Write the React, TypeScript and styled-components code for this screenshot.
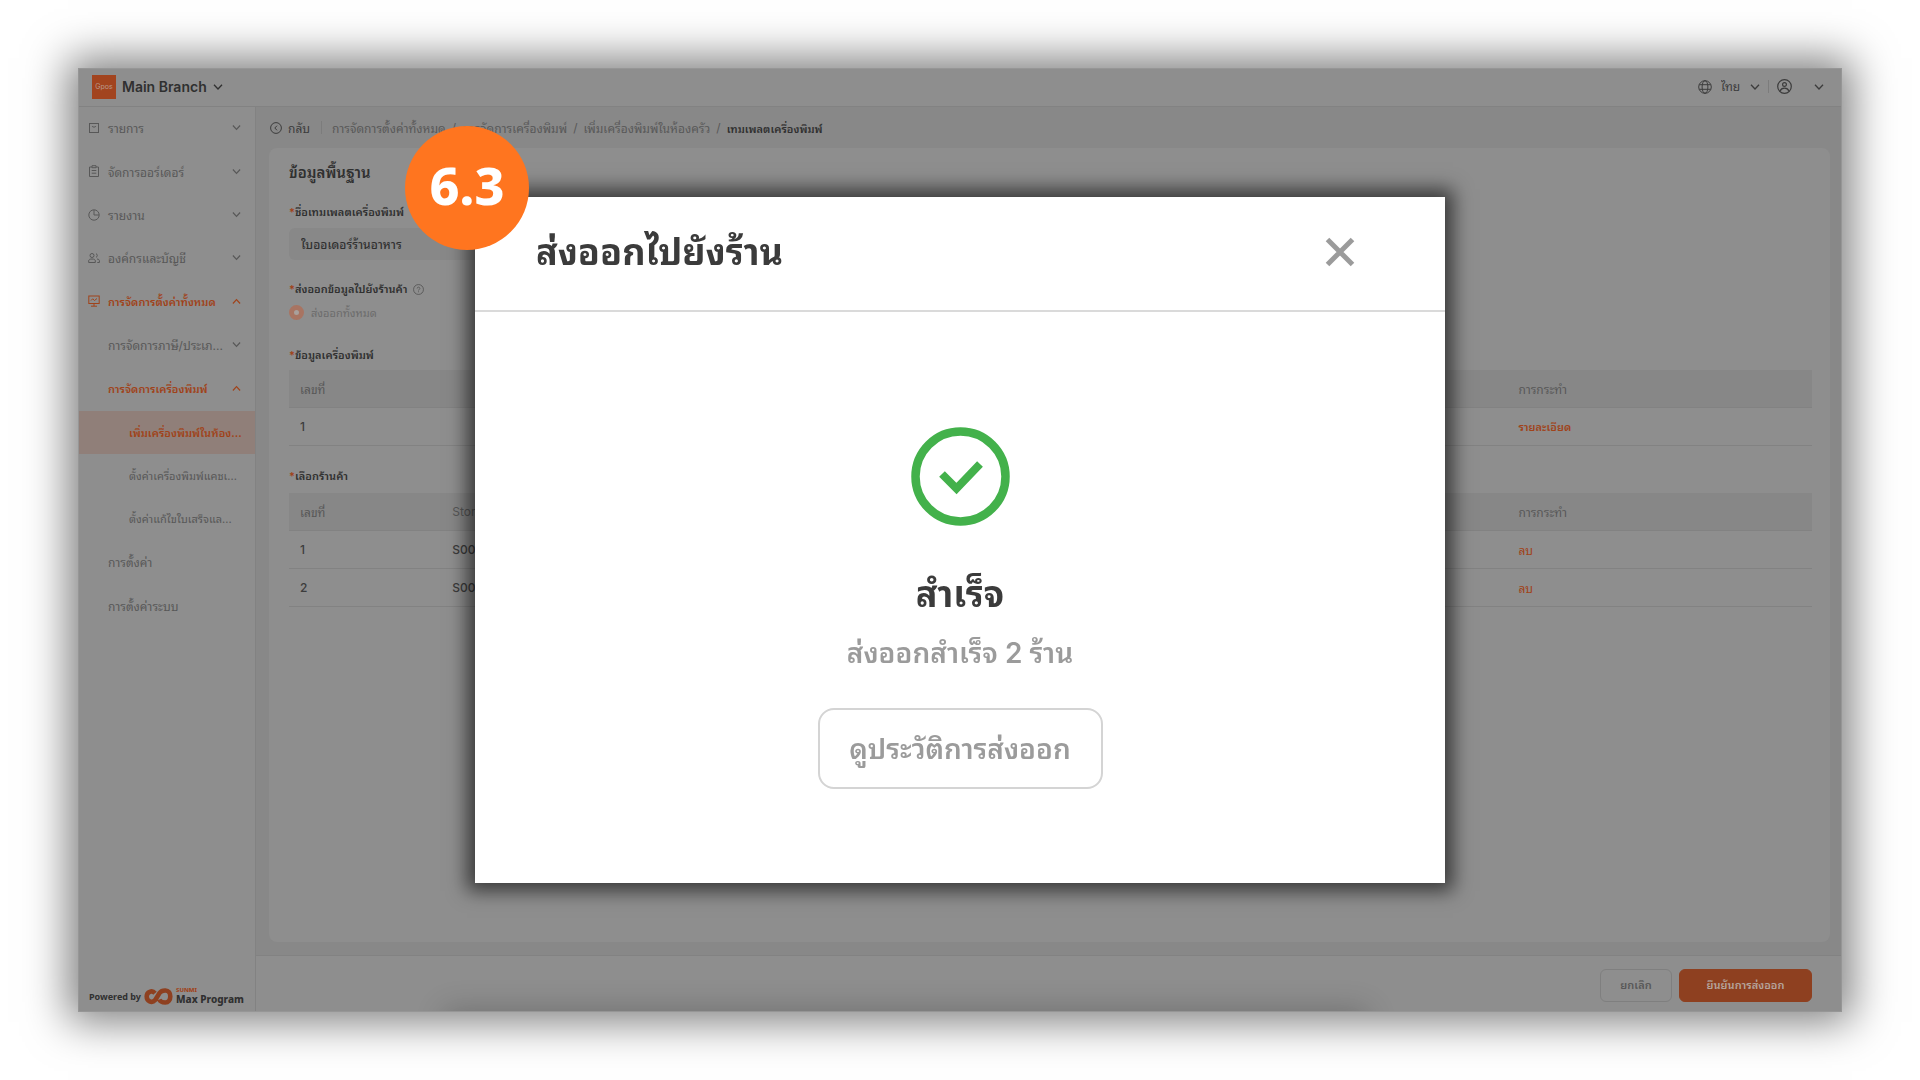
import React from "react";
import styled, { createGlobalStyle, css } from "styled-components";

const c = {
  panel: "#8e8e8e",
  canvas: "#888888",
  line: "#828282",
  ink: "#303030",
  text: "#3c3c3c",
  muted: "#585858",
  faint: "#6c6c6c",
  orange: "#a0431a",
  orangeFill: "#8e4020",
};

const Global = createGlobalStyle`
  *, *::before, *::after { box-sizing: border-box; }
  body { margin: 0; background: #fff; }
  body, button, select, input {
    font-family: Inter, "Noto Sans Thai Looped", Thonburi, Loma, Garuda, Waree, "Noto Sans Thai", "Noto Sans", sans-serif;
  }
  button, select { border: 0; background: none; padding: 0; margin: 0; color: inherit; cursor: pointer; }
  a { color: inherit; text-decoration: none; }
  svg { display: block; flex: none; }
`;

const Page = styled.div`
  min-height: 100vh;
  display: flex;
  padding: 68px 78px;
`;
const Window = styled.div`
  flex: 1;
  min-width: 0;
  display: flex;
  flex-direction: column;
  background: ${c.panel};
  border: 1px solid #969696;
  box-shadow: 0 0 40px 10px rgba(0, 0, 0, 0.5);
  font-size: 12px;
  color: ${c.text};
`;
const TopBar = styled.header`
  height: 38px;
  flex: none;
  display: flex;
  align-items: center;
  justify-content: space-between;
  padding: 0 17px 2px 13px;
  border-bottom: 1px solid ${c.line};
`;
const Cluster = styled.div<{ $gap: number }>`
  display: flex;
  align-items: center;
  gap: ${(p) => p.$gap}px;
`;
const Branch = styled.button`
  display: flex;
  align-items: center;
  gap: 6px;
  font-size: 14px;
  font-weight: 600;
  color: ${c.ink};
`;
const BrandTile = styled.span`
  width: 24px;
  height: 24px;
  display: grid;
  place-items: center;
  background: #a2441f;
  color: #b99a8e;
  font-size: 7px;
  font-weight: 400;
`;
const LangSelect = styled.select`
  appearance: none;
  font-size: 12px;
  color: ${c.text};
`;
const IconButton = styled.button`
  display: flex;
  align-items: center;
  gap: 22px;
  color: ${c.text};
`;
const VLine = styled.span`
  width: 1px;
  height: 13px;
  background: #7c7c7c;
`;
const Body = styled.div`
  flex: 1;
  min-height: 0;
  display: flex;
`;
const Sidebar = styled.aside`
  width: 177px;
  flex: none;
  display: flex;
  flex-direction: column;
  justify-content: space-between;
  border-right: 1px solid ${c.line};
`;
const Menu = styled.nav`
  height: 521px;
  display: grid;
  grid-auto-rows: 1fr;
`;
const MenuItem = styled.button<{ $level: number; $hot?: boolean; $active?: boolean }>`
  display: flex;
  align-items: center;
  min-width: 0;
  gap: 8px;
  padding: 0 14px 2px ${(p) => (p.$level === 0 ? 9 : p.$level === 1 ? 29 : 50)}px;
  font-size: ${(p) => (p.$hot || p.$level === 2 ? 11 : 12)}px;
  color: ${c.muted};
  text-align: left;
  ${(p) => p.$hot && css`color: ${c.orange}; font-weight: 600;`}
  ${(p) => p.$active && css`background: #907f79;`}
`;
const MenuText = styled.span`
  flex: 1;
  white-space: nowrap;
`;
const Powered = styled.div`
  display: flex;
  align-items: center;
  gap: 3px;
  padding: 0 10px 6px;
  font-family: "Noto Sans", sans-serif;
  font-size: 9px;
  font-weight: 700;
  color: ${c.ink};
  white-space: nowrap;
`;
const PoweredName = styled.span`
  display: flex;
  flex-direction: column;
  font-size: 10px;
  line-height: 12px;
  font-weight: 800;
`;
const PoweredBrand = styled.span`
  font-size: 6px;
  line-height: 6px;
  color: ${c.orange};
`;
const Main = styled.main`
  flex: 1;
  min-width: 0;
  display: flex;
  flex-direction: column;
  background: ${c.canvas};
`;
const Crumbs = styled.nav`
  height: 41px;
  flex: none;
  display: flex;
  align-items: center;
  gap: 6px;
  padding: 0 14px;
  color: ${c.muted};
  white-space: nowrap;
`;
const Back = styled.a`
  display: flex;
  align-items: center;
  gap: 6px;
  padding-right: 5px;
  color: ${c.text};
`;
const Current = styled.span`
  color: ${c.ink};
  font-size: 11px;
  font-weight: 600;
`;
const CrumbStart = styled.a`
  padding-left: 4px;
`;
const Card = styled.section`
  flex: 1;
  margin: 0 11px 13px 13px;
  padding: 12px 18px 20px 20px;
  border-radius: 8px;
  background: ${c.panel};
`;
const CardTitle = styled.h2`
  margin: 0 0 17px;
  font-size: 15px;
  line-height: 25px;
  font-weight: 600;
  color: ${c.ink};
`;
const labelCss = css`
  display: flex;
  align-items: center;
  margin: 0;
  font-size: 11px;
  line-height: 20px;
  font-weight: 600;
  color: ${c.ink};
  &::before { content: "*"; color: ${c.orange}; }
`;
const Label = styled.label`
  ${labelCss}
`;
const GroupLabel = styled.h3<{ $top: number; $bottom: number }>`
  ${labelCss}
  padding: ${(p) => p.$top}px 0 ${(p) => p.$bottom}px;
  svg { margin-left: 5px; color: ${c.muted}; }
`;
const TextInput = styled.input`
  display: block;
  width: 300px;
  height: 32px;
  margin-top: 6px;
  padding: 0 12px 2px;
  border: 0;
  border-radius: 6px;
  background: ${c.canvas};
  font-size: 12px;
  font-weight: 500;
  color: ${c.ink};
`;
const RadioLabel = styled.label`
  display: flex;
  align-items: center;
  gap: 7px;
  height: 18px;
  color: ${c.faint};
  font-size: 11px;
`;
const Radio = styled.input`
  appearance: none;
  width: 15px;
  height: 15px;
  margin: 0;
  border: 5px solid #a87462;
  border-radius: 50%;
  background: #a9a09c;
`;
const Table = styled.table`
  width: 100%;
  table-layout: fixed;
  border-collapse: separate;
  border-spacing: 0;
  th, td {
    height: 38px;
    padding: 0 11px 1px;
    border-bottom: 1px solid ${c.line};
    text-align: left;
    font-size: 12px;
    font-weight: 500;
  }
  th { background: #878787; color: ${c.muted}; font-weight: 400; }
  col:first-child { width: 10%; }
  col:last-child { width: 20%; }
`;
const RowLink = styled.a<{ $strong?: boolean }>`
  color: ${c.orange};
  font-size: ${(p) => (p.$strong ? 11 : 12)}px;
  font-weight: ${(p) => (p.$strong ? 600 : 400)};
`;
const Footer = styled.footer`
  position: relative;
  overflow: hidden;
  height: 56px;
  flex: none;
  display: flex;
  align-items: center;
  justify-content: flex-end;
  gap: 7px;
  padding: 3px 29px 0 0;
  border-top: 1px solid ${c.line};
  background: ${c.panel};
  &::after {
    content: "";
    position: absolute;
    left: 12%;
    right: 30%;
    top: 100%;
    height: 40px;
    box-shadow: 0 0 30px 2px rgba(0, 0, 0, 0.2);
  }
`;
const FooterButton = styled.button<{ $primary?: boolean }>`
  height: 33px;
  min-width: ${(p) => (p.$primary ? 133 : 72)}px;
  padding: 0 12px 2px;
  border: 1px solid ${(p) => (p.$primary ? c.orangeFill : "#7f7f7f")};
  border-radius: 6px;
  background: ${(p) => (p.$primary ? c.orangeFill : "transparent")};
  color: ${(p) => (p.$primary ? "#b5a49c" : c.muted)};
  font-size: 11px;
  font-weight: 600;
  white-space: nowrap;
`;

const Overlay = styled.div`
  position: fixed;
  inset: 0;
  display: grid;
  place-items: center;
`;
const Modal = styled.div`
  position: relative;
  width: 970px;
  max-width: 90vw;
  background: #fff;
  box-shadow: 0 0 18px 8px rgba(0, 0, 0, 0.6);
`;
const ModalHead = styled.div`
  height: 115px;
  display: flex;
  align-items: center;
  justify-content: space-between;
  padding: 0 90px 4px 61px;
  border-bottom: 2px solid #dadada;
`;
const ModalTitle = styled.h1`
  margin: 0;
  font-size: 36px;
  line-height: 48px;
  font-weight: 700;
  color: #3b3b3b;
`;
const CloseButton = styled.button`
  display: flex;
  color: #9b9b9b;
`;
const ModalBody = styled.div`
  display: flex;
  flex-direction: column;
  align-items: center;
  padding: 115px 40px 94px;
`;
const ResultTitle = styled.h2`
  margin: 42px 0 0;
  font-size: 36px;
  line-height: 52px;
  font-weight: 700;
  color: #3b3b3b;
`;
const ResultText = styled.p`
  margin: 12px 0 34px;
  font-size: 28px;
  line-height: 42px;
  font-weight: 600;
  color: #9b9b9b;
`;
const HistoryButton = styled.button`
  height: 81px;
  min-width: 285px;
  padding: 0 24px 4px;
  border: 2px solid #d4d4d4;
  border-radius: 16px;
  font-size: 28px;
  font-weight: 600;
  color: #9b9b9b;
`;
const StepBadge = styled.div`
  position: absolute;
  left: -70px;
  top: -71px;
  width: 124px;
  height: 124px;
  padding-bottom: 8px;
  display: grid;
  place-items: center;
  border-radius: 50%;
  background: #ff751f;
  color: #fff;
  font-family: "Noto Sans", sans-serif;
  font-size: 52px;
  font-weight: 800;
`;

const Chevron = ({ up, size = 9 }: { up?: boolean; size?: number }) => (
  <svg width={size} height={size} viewBox="0 0 10 10" fill="none" stroke="currentColor" strokeWidth="1.3">
    <path d={up ? "M1 7.2 5 3l4 4.2" : "M1 2.8 5 7l4-4.2"} />
  </svg>
);

const paths: Record<string, React.ReactNode> = {
  box: <><rect x="1.5" y="1.5" width="9" height="9" /><path d="M4 4c.5 1.500 3.500 1.500 4 0" /></>,
  clipboard: <><path d="M4 2H1.500v9.500h9V2H8" /><path d="M4 .7h4v2H4zM3.700 5.500h4.600M3.700 8.200h4.600" /></>,
  clock: <><circle cx="6" cy="6" r="5.200" /><path d="M6 1v5h5" /></>,
  people: <><circle cx="4" cy="3.500" r="2" /><path d="M.7 10.500V8.800C.7 7.600 1.700 7 4 7s3.300.6 3.300 1.800v1.700zM8 1.700a1.900 1.900 0 0 1 0 3.600M9 7c1.700.2 2.400.8 2.400 1.800v1.700H9.300" /></>,
  monitor: <><rect x=".8" y="1" width="10.400" height="7.500" /><path d="M3 5.500l1.700-1.700L6.500 5.500 9 3.500M6 8.500V11M3 11.200h6" /></>,
};
const MenuIcon = ({ name }: { name: string }) => (
  <svg width="12" height="12" viewBox="0 0 12 12" fill="none" stroke="currentColor" strokeWidth="1">
    {paths[name]}
  </svg>
);

type Item = { text: string; level: number; icon?: string; arrow?: "up" | "down"; hot?: boolean; active?: boolean };
const menu: Item[] = [
  { text: "รายการ", level: 0, icon: "box", arrow: "down" },
  { text: "จัดการออร์เดอร์", level: 0, icon: "clipboard", arrow: "down" },
  { text: "รายงาน", level: 0, icon: "clock", arrow: "down" },
  { text: "องค์กรและบัญชี", level: 0, icon: "people", arrow: "down" },
  { text: "การจัดการตั้งค่าทั้งหมด", level: 0, icon: "monitor", arrow: "up", hot: true },
  { text: "การจัดการภาษี/ประเภ...", level: 1, arrow: "down" },
  { text: "การจัดการเครื่องพิมพ์", level: 1, arrow: "up", hot: true },
  { text: "เพิ่มเครื่องพิมพ์ในห้อง...", level: 2, hot: true, active: true },
  { text: "ตั้งค่าเครื่องพิมพ์แคชเ...", level: 2 },
  { text: "ตั้งค่าแก้ไขใบเสร็จแล...", level: 2 },
  { text: "การตั้งค่า", level: 1 },
  { text: "การตั้งค่าระบบ", level: 1 },
];

const Cols = () => (
  <colgroup>
    <col />
    <col />
    <col />
  </colgroup>
);

export default function App() {
  return (
    <>
      <Global />
      <Page>
        <Window>
          <TopBar>
            <Branch>
              <BrandTile>Gpos</BrandTile>
              Main Branch
              <Chevron size={10} />
            </Branch>
            <Cluster $gap={8}>
              <Cluster $gap={9}>
                <svg width="14" height="14" viewBox="0 0 14 14" fill="none" stroke="currentColor">
                  <circle cx="7" cy="7" r="6.300" />
                  <ellipse cx="7" cy="7" rx="2.900" ry="6.300" />
                  <path d="M1.300 4.700h11.400M1.300 9.300h11.400" />
                </svg>
                <LangSelect aria-label="ภาษา" defaultValue="th">
                  <option value="th">ไทย</option>
                </LangSelect>
                <Chevron size={10} />
              </Cluster>
              <VLine />
              <IconButton aria-label="บัญชี">
                <svg width="15" height="15" viewBox="0 0 15 15" fill="none" stroke="currentColor" strokeWidth="1.200">
                  <circle cx="7.500" cy="7.500" r="6.800" />
                  <circle cx="7.500" cy="5.500" r="1.900" />
                  <path d="M3 12.200c.8-2.200 2.400-3 4.500-3s3.700.8 4.500 3" />
                </svg>
                <Chevron size={10} />
              </IconButton>
            </Cluster>
          </TopBar>
          <Body>
            <Sidebar>
              <Menu>
                {menu.map((m) => (
                  <MenuItem key={m.text} $level={m.level} $hot={m.hot} $active={m.active}>
                    {m.icon && <MenuIcon name={m.icon} />}
                    <MenuText>{m.text}</MenuText>
                    {m.arrow && <Chevron up={m.arrow === "up"} />}
                  </MenuItem>
                ))}
              </Menu>
              <Powered>
                Powered by
                <svg width="29" height="17" viewBox="0 0 29 17" fill="none" stroke={c.orangeFill} strokeWidth="4.600">
                  <path d="M11 5.200C8 1.700 2.700 4 2.700 8.500s5 7.300 8.500 3.500L15.500 5c2-2.700 4-2.500 6-2.500 3 0 4.800 2.500 4.800 6s-2 6-5 6c-2.300 0-4.800 0-6-3" />
                </svg>
                <PoweredName>
                  <PoweredBrand>SUNMI</PoweredBrand>
                  Max Program
                </PoweredName>
              </Powered>
            </Sidebar>
            <Main>
              <Crumbs aria-label="เส้นทาง">
                <Back href="#back">
                  <svg width="12" height="12" viewBox="0 0 12 12" fill="none" stroke="currentColor">
                    <circle cx="6" cy="6" r="5.400" />
                    <path d="M7 3.700 4.800 6 7 8.300" />
                  </svg>
                  กลับ
                </Back>
                <VLine />
                <CrumbStart href="#settings">การจัดการตั้งค่าทั้งหมด</CrumbStart>
                <span>/</span>
                <a href="#printers">การจัดการเครื่องพิมพ์</a>
                <span>/</span>
                <a href="#kitchen">เพิ่มเครื่องพิมพ์ในห้องครัว</a>
                <span>/</span>
                <Current>เทมเพลตเครื่องพิมพ์</Current>
              </Crumbs>
              <Card>
                <CardTitle>ข้อมูลพื้นฐาน</CardTitle>
                <Label htmlFor="template-name">ชื่อเทมเพลตเครื่องพิมพ์</Label>
                <TextInput id="template-name" defaultValue="ใบออเดอร์ร้านอาหาร" />
                <GroupLabel $top={19} $bottom={4}>
                  ส่งออกข้อมูลไปยังร้านค้า
                  <svg width="11" height="11" viewBox="0 0 12 12" fill="none" stroke="currentColor">
                    <circle cx="6" cy="6" r="5.400" />
                    <path d="M4.500 4.900c0-2 3-2 3 0 0 1-1.500 1-1.500 2.200M6 8v1" />
                  </svg>
                </GroupLabel>
                <RadioLabel>
                  <Radio type="radio" name="scope" defaultChecked />
                  ส่งออกทั้งหมด
                </RadioLabel>
                <GroupLabel $top={24} $bottom={5}>ข้อมูลเครื่องพิมพ์</GroupLabel>
                <Table>
                  <Cols />
                  <thead>
                    <tr><th>เลขที่</th><th /><th>การกระทำ</th></tr>
                  </thead>
                  <tbody>
                    <tr><td>1</td><td /><td><RowLink $strong href="#detail">รายละเอียด</RowLink></td></tr>
                  </tbody>
                </Table>
                <GroupLabel $top={20} $bottom={7}>เลือกร้านค้า</GroupLabel>
                <Table>
                  <Cols />
                  <thead>
                    <tr><th>เลขที่</th><th>Store</th><th>การกระทำ</th></tr>
                  </thead>
                  <tbody>
                    <tr><td>1</td><td>S001</td><td><RowLink href="#remove-1">ลบ</RowLink></td></tr>
                    <tr><td>2</td><td>S002</td><td><RowLink href="#remove-2">ลบ</RowLink></td></tr>
                  </tbody>
                </Table>
              </Card>
              <Footer>
                <FooterButton>ยกเลิก</FooterButton>
                <FooterButton $primary>ยืนยันการส่งออก</FooterButton>
              </Footer>
            </Main>
          </Body>
        </Window>
      </Page>
      <Overlay>
        <Modal role="dialog" aria-labelledby="dialog-title">
          <ModalHead>
            <ModalTitle id="dialog-title">ส่งออกไปยังร้าน</ModalTitle>
            <CloseButton aria-label="ปิด">
              <svg width="30" height="30" viewBox="0 0 30 30" stroke="currentColor" strokeWidth="5">
                <path d="M2.500 2.500l25 25M27.500 2.500l-25 25" />
              </svg>
            </CloseButton>
          </ModalHead>
          <ModalBody>
            <svg width="99" height="99" viewBox="0 0 99 99" fill="none" stroke="#43b14b">
              <circle cx="49.500" cy="49.500" r="45" strokeWidth="8.500" />
              <path d="M31 47l14.500 14.500L69 37" strokeWidth="8" />
            </svg>
            <ResultTitle>สำเร็จ</ResultTitle>
            <ResultText>ส่งออกสำเร็จ 2 ร้าน</ResultText>
            <HistoryButton>ดูประวัติการส่งออก</HistoryButton>
          </ModalBody>
          <StepBadge>6.3</StepBadge>
        </Modal>
      </Overlay>
    </>
  );
}
